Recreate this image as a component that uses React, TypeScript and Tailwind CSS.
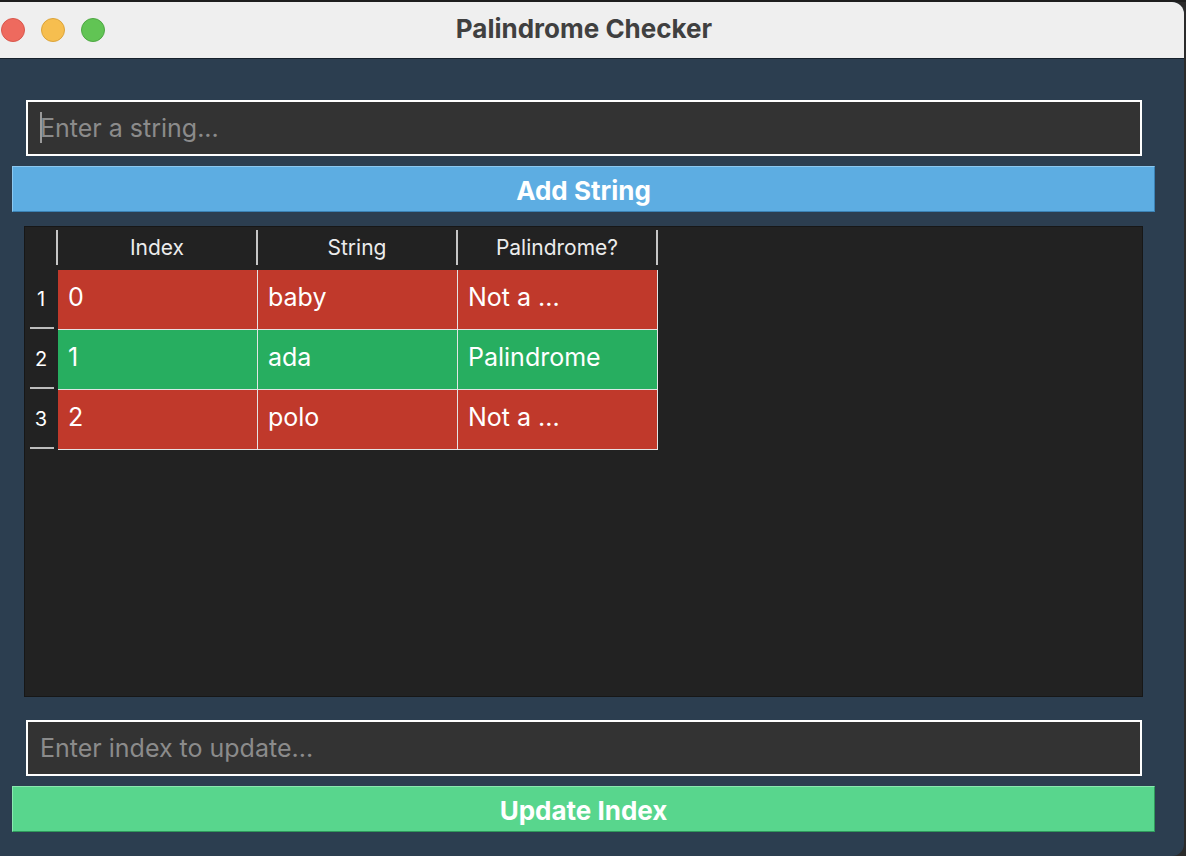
import React from 'react';

type Row = { index: number; text: string; palindrome: boolean };

const ROWS: Row[] = [
  { index: 0, text: 'baby', palindrome: false },
  { index: 1, text: 'ada', palindrome: true },
  { index: 2, text: 'polo', palindrome: false },
];

const FONT = { fontFamily: 'Inter, "Noto Sans", "Liberation Sans", sans-serif' };

function TrafficLights() {
  return (
    <div className="flex items-center gap-[16px] pl-px">
      <span className="block size-[24px] rounded-full border border-[#d9574c] bg-[#ee6a5e]" />
      <span className="block size-[24px] rounded-full border border-[#dca43a] bg-[#f6be4f]" />
      <span className="block size-[24px] rounded-full border border-[#4ea843] bg-[#61c454]" />
    </div>
  );
}

function TextField({ placeholder, caret }: { placeholder: string; caret?: boolean }) {
  return (
    <div className="relative ml-[26px] h-[56px] w-[1116px] border-2 border-white bg-[#333333]">
      <input
        className="h-full w-full bg-transparent pl-[12px] text-[25px] text-white outline-none placeholder:text-[#8b8b8b]"
        placeholder={placeholder}
        style={FONT}
      />
      {caret && <span className="absolute left-[12px] top-[10px] h-[31px] w-[2px] bg-[#9a9a9a]" />}
    </div>
  );
}

function ActionButton({ label, tone }: { label: string; tone: 'blue' | 'green' }) {
  const cls =
    tone === 'blue'
      ? 'border-t-[#8cc8f0] border-l-[#8cc8f0] border-b-[#3b82b5] border-r-[#3b82b5] bg-[#5dade2]'
      : 'border-t-[#8ae9b0] border-l-[#8ae9b0] border-b-[#2f9a5c] border-r-[#2f9a5c] bg-[#58d68d]';
  return (
    <button
      className={
        'ml-[12px] flex h-[46px] w-[1143px] items-center justify-center border pt-[3px] text-[26px] font-bold text-white ' +
        cls
      }
      style={FONT}
    >
      {label}
    </button>
  );
}

function HeaderCell({ label }: { label: string }) {
  return (
    <div className="flex h-[35px] w-[200px] items-center justify-center border-r-2 border-[#c6c6c6] text-[21px] text-[#ececec]">
      {label}
    </div>
  );
}

function DataTable() {
  return (
    <div
      className="ml-[24px] mt-[14px] h-[471px] w-[1119px] border border-[#171717] bg-[#222222] pt-[3px]"
      style={FONT}
    >
      {/* Header */}
      <div className="flex">
        <div className="h-[35px] w-[33px] border-r-2 border-[#c6c6c6]" />
        <HeaderCell label="Index" />
        <HeaderCell label="String" />
        <HeaderCell label="Palindrome?" />
      </div>

      {/* Body */}
      <div className="mt-[5px]">
        {ROWS.map((r, i) => {
          const bg = r.palindrome ? 'bg-[#27ae60]' : 'bg-[#c0392b]';
          const status = r.palindrome ? 'Palindrome' : 'Not a ...';
          return (
            <div key={i} className="flex h-[60px]">
              <div className="flex w-[33px] flex-col items-center">
                <div className="flex flex-1 items-center justify-center pr-[1px] text-[20px] text-white">
                  {i + 1}
                </div>
                <div className="mb-px h-[2px] w-[24px] bg-[#bdbdbd]" />
              </div>
              {[String(r.index), r.text, status].map((v, j) => (
                <div
                  key={j}
                  className={
                    'flex w-[200px] items-center border-b border-r border-[#e4e4e4] pb-[3px] pl-[10px] text-[25px] text-white ' +
                    bg
                  }
                >
                  {v}
                </div>
              ))}
            </div>
          );
        })}
      </div>
    </div>
  );
}

export default function App() {
  return (
    <div className="relative h-[856px] w-[1186px] overflow-hidden bg-[#2b2b2b]">
      <div className="h-[2px] bg-[#1e1e1e]" />
      <div className="flex h-[854px] w-[1184px] flex-col overflow-hidden rounded-r-[12px] bg-[#2c3e50]">
        {/* Title bar */}
        <div className="relative flex h-[57px] shrink-0 items-center border-b border-[#16212c] bg-[#efefef]">
          <TrafficLights />
          <div
            className="absolute inset-x-0 top-0 flex h-full items-center justify-center pb-[4px] pr-[16px] text-[26px] font-bold text-[#404040]"
            style={FONT}
          >
            Palindrome Checker
          </div>
        </div>

        {/* Content */}
        <div className="pt-[41px]">
          <TextField placeholder="Enter a string..." caret />
          <div className="mt-[10px]">
            <ActionButton label="Add String" tone="blue" />
          </div>
          <DataTable />
          <div className="mt-[23px]">
            <TextField placeholder="Enter index to update..." />
          </div>
          <div className="mt-[10px]">
            <ActionButton label="Update Index" tone="green" />
          </div>
        </div>
      </div>
    </div>
  );
}
